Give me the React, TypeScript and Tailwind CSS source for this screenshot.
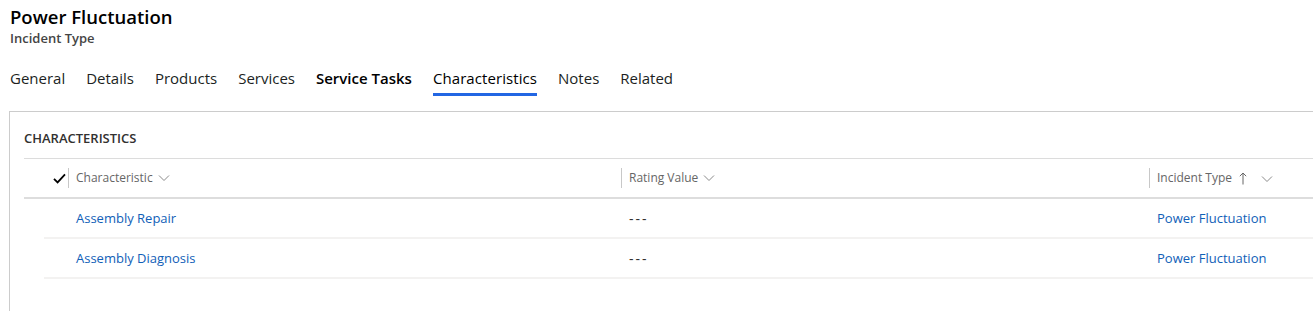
import React from "react";

const font = { fontFamily: '"Segoe UI", "Open Sans", "Noto Sans", sans-serif' };

function Chevron() {
  return (
    <svg width="12" height="8" viewBox="0 0 12 8" className="ml-[5px] inline-block">
      <path d="M1 1.5 L6 6.5 L11 1.5" fill="none" stroke="#8a8a8a" strokeWidth="1" />
    </svg>
  );
}

function UpArrow() {
  return (
    <svg width="8" height="13" viewBox="0 0 8 13" className="ml-[7px] inline-block">
      <path d="M4 12.5 V1 M0.8 4.2 L4 1 L7.2 4.2" fill="none" stroke="#666" strokeWidth="1" />
    </svg>
  );
}

const tabs = [
  { label: "General" },
  { label: "Details" },
  { label: "Products" },
  { label: "Services" },
  { label: "Service Tasks", bold: true },
  { label: "Characteristics", active: true },
  { label: "Notes" },
  { label: "Related" },
];

const rows = ["Assembly Repair", "Assembly Diagnosis"];

export default function App() {
  return (
    <div className="w-[1313px] h-[311px] overflow-hidden bg-white text-[#201f1e]" style={font}>
      <div className="pl-[10px] pt-[3px]">
        <div className="text-[18.5px] font-semibold leading-[27px] text-[#000]">Power Fluctuation</div>
        <div className="text-[13px] font-semibold leading-[16px] text-[#444]">Incident Type</div>
      </div>
      <div className="flex gap-[21px] pl-[10px] mt-[20px] h-[46px]">
        {tabs.map((t) => (
          <div key={t.label} className="relative">
            <div
              className={
                "text-[15px] leading-[24px] " +
                (t.bold
                  ? "font-semibold text-[#000]"
                  : t.active
                  ? "font-medium text-[#000] tracking-[0.08px]"
                  : "text-[#201f1e]")
              }
            >
              {t.label}
            </div>
            {t.active && <div className="absolute left-0 right-0 top-[27px] h-[3px] bg-[#2266e3]" />}
          </div>
        ))}
      </div>
      <div className="ml-[9px] mt-[-1px] border-l border-t border-[#cccccc] h-[300px] pl-[14px]">
        <div className="h-[46px] flex items-end pb-[12px]">
          <span className="text-[13px] font-semibold leading-[16px] text-[#323130]">CHARACTERISTICS</span>
        </div>
        <div className="border-t border-[#dcdcdc]">
          <div className="flex h-[40px] items-center border-b-2 border-[#dddddd]">
            <div className="w-[44px] flex justify-end pr-[1px] items-center h-full">
              <svg width="13" height="11" viewBox="0 0 13 11" className="mr-[1px]">
                <path d="M1 5.8 L4.6 9.4 L12 1.4" fill="none" stroke="#000" strokeWidth="1.8" />
              </svg>
            </div>
            <div className="w-[553px] flex items-center border-l border-[#c8c8c8] h-[20px] pl-[7px] text-[12px] text-[#666]">
              Characteristic
              <Chevron />
            </div>
            <div className="w-[528px] flex items-center border-l border-[#c8c8c8] h-[20px] pl-[7px] text-[12px] text-[#666]">
              Rating Value
              <Chevron />
            </div>
            <div className="flex-1 flex items-center border-l border-[#c8c8c8] h-[20px] pl-[7px] text-[12px] text-[#666]">
              Incident Type
              <UpArrow />
              <span className="ml-[9px]"><Chevron /></span>
            </div>
          </div>
          {rows.map((r) => (
            <div key={r} className="ml-[20px] flex h-[40px] items-center pt-[1px] border-b-2 border-[#f3f2f1] text-[13px]">
              <div className="w-[32px]" />
              <div className="w-[553px] text-[#1160b7]">{r}</div>
              <div className="w-[528px] text-[#323130] text-[14px] tracking-[2px]">---</div>
              <div className="flex-1 text-[#1160b7]">Power Fluctuation</div>
            </div>
          ))}
        </div>
      </div>
    </div>
  );
}
